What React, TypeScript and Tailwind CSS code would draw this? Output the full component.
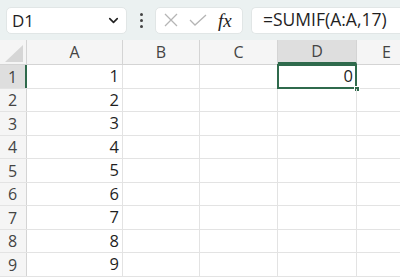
import { ChevronDown } from "lucide-react";

const cols = [
  { name: "A", w: "w-[96px]" },
  { name: "B", w: "w-[77px]" },
  { name: "C", w: "w-[78px]" },
  { name: "D", w: "w-[79px]" },
  { name: "E", w: "w-[60px]" },
];

const rowHeights = ["h-[24px]", "h-[23px]", "h-[24px]", "h-[23px]", "h-[24px]", "h-[23px]", "h-[24px]", "h-[23px]", "h-[24px]"];

export default function App() {
  return (
    <div className="w-[400px] h-[280px] overflow-hidden bg-white font-['Open_Sans',sans-serif] text-[#1f1f1f]">
      {/* formula bar */}
      <div className="h-[40px] bg-[#ebf1f1] flex items-center pl-[6px] gap-[8px]">
        <div className="w-[121px] h-[27px] bg-white rounded-[5px] border border-[#e1e6e6] flex items-center justify-between pl-[5px] pr-[5px]">
          <span className="text-[17px] leading-none">D1</span>
          <ChevronDown size={15} strokeWidth={2.6} className="text-[#222]" />
        </div>
        <div className="w-[10px] flex flex-col items-center gap-[3px] mx-[1px]">
          <span className="w-[3px] h-[3px] rounded-full bg-[#444]" />
          <span className="w-[3px] h-[3px] rounded-full bg-[#444]" />
          <span className="w-[3px] h-[3px] rounded-full bg-[#444]" />
        </div>
        <div className="w-[88px] h-[27px] bg-white rounded-[5px] border border-[#e1e6e6] flex items-center pl-[7px] gap-[10px]">
          <svg width="16" height="16" viewBox="0 0 16 16" className="text-[#b5b5b5]">
            <path d="M2 2 L14 14 M14 2 L2 14" stroke="currentColor" strokeWidth="1.3" fill="none" />
          </svg>
          <svg width="18" height="14" viewBox="0 0 18 14" className="text-[#b5b5b5]">
            <path d="M1 7 L6 12 L17 2" stroke="currentColor" strokeWidth="1.3" fill="none" />
          </svg>
          <span className="font-['Liberation_Serif',serif] italic text-[19px] leading-none text-[#222] ml-[1px]">fx</span>
        </div>
        <div className="flex-1 h-[27px] bg-white rounded-l-[5px] border border-r-0 border-[#e1e6e6] flex items-center pl-[11px]">
          <span className="text-[17.5px] leading-none">=SUMIF(A:A,17)</span>
        </div>
      </div>

      {/* column headers */}
      <div className="flex h-[25px] bg-[#f5f5f5] border-b border-[#d4d4d4]">
        <div className="w-[27px] shrink-0 border-r border-[#d4d4d4] relative">
          <svg width="18" height="17" viewBox="0 0 18 17" className="absolute right-[3px] bottom-[2px]">
            <path d="M18 0 L18 17 L0 17 Z" fill="#d6d6d6" />
          </svg>
        </div>
        {cols.map((c) => (
          <div
            key={c.name}
            className={`${c.w} shrink-0 flex items-center justify-center text-[16px] text-[#444] border-r ${
              c.name === "D" ? "bg-[#dedede] border-b-2 border-b-[#2f6a4c] border-r-[#d4d4d4]" : "border-[#d4d4d4]"
            }`}
          >
            {c.name}
          </div>
        ))}
      </div>

      {/* rows */}
      {rowHeights.map((h, i) => (
        <div key={i} className={`flex ${h} border-b border-[#e3e3e3]`}>
          <div
            className={`w-[27px] shrink-0 flex items-center pl-[8px] text-[16px] text-[#444] ${
              i === 0 ? "bg-[#dedede] border-r-2 border-[#2f6a4c]" : "bg-[#f5f5f5] border-r border-[#d4d4d4]"
            }`}
          >
            {i + 1}
          </div>
          {cols.map((c) => (
            <div key={c.name} className={`${c.w} shrink-0 border-r border-[#e3e3e3] relative flex items-center justify-end pr-[3px] text-[16.5px]`}>
              {c.name === "A" && <span>{i + 1}</span>}
              {c.name === "D" && i === 0 && (
                <>
                  <span>0</span>
                  <div className="absolute left-[-1px] top-[-1px] right-[-1px] bottom-[-1px] border-2 border-[#2f6a4c]" />
                  <div className="absolute right-[-4px] bottom-[-4px] w-[6px] h-[6px] bg-[#2f6a4c] border border-white" />
                </>
              )}
            </div>
          ))}
        </div>
      ))}
    </div>
  );
}
